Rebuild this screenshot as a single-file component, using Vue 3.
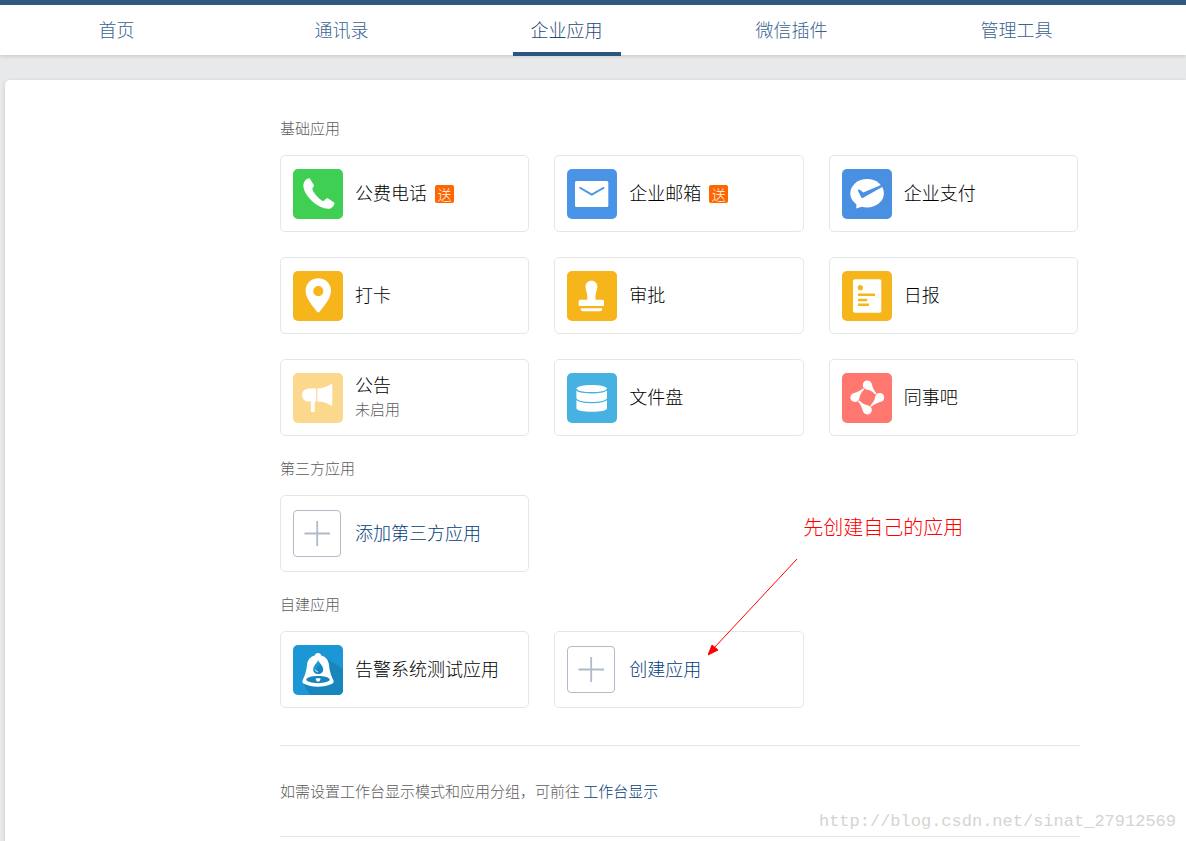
<script setup>
const navItems = [
  { label: '首页' },
  { label: '通讯录' },
  { label: '企业应用', active: true },
  { label: '微信插件' },
  { label: '管理工具' },
]

const sections = [
  {
    title: '基础应用',
    apps: [
      { name: '公费电话', icon: 'phone', color: '#3ecf53', gift: true },
      { name: '企业邮箱', icon: 'mail', color: '#4a94e8', gift: true },
      { name: '企业支付', icon: 'pay', color: '#4a90e2' },
      { name: '打卡', icon: 'pin', color: '#f7b51c' },
      { name: '审批', icon: 'stamp', color: '#f7b51c' },
      { name: '日报', icon: 'report', color: '#f7b51c' },
      { name: '公告', icon: 'horn', color: '#fbd88c', status: '未启用' },
      { name: '文件盘', icon: 'disk', color: '#47b2e1' },
      { name: '同事吧', icon: 'team', color: '#ff776f' },
    ],
  },
  {
    title: '第三方应用',
    apps: [{ name: '添加第三方应用', icon: 'add' }],
  },
  {
    title: '自建应用',
    apps: [
      { name: '告警系统测试应用', icon: 'bell', color: '#1b97d5' },
      { name: '创建应用', icon: 'add', note: '先创建自己的应用' },
    ],
  },
]
</script>

<template>
  <div class="page">
    <header class="header">
      <nav class="nav">
        <a
          v-for="item in navItems"
          :key="item.label"
          href="#"
          class="nav-link"
        ><span class="nav-label" :class="{ active: item.active }">{{ item.label }}</span></a>
      </nav>
    </header>

    <main class="panel">
      <section v-for="section in sections" :key="section.title" class="section">
        <h2 class="section-title">{{ section.title }}</h2>
        <ul class="grid">
          <li v-for="app in section.apps" :key="app.name" class="cell">
            <a href="#" class="card" :class="{ action: app.icon === 'add' }">
              <svg class="icon" viewBox="0 0 50 50" aria-hidden="true">
                <rect v-if="app.color" width="50" height="50" rx="5" :fill="app.color" />
                <path
                  v-if="app.icon === 'phone'"
                  fill="#fff"
                  d="M15.7 9.3Q16.6 9.1 17.1 10L20.8 16Q21.3 17 20.3 18Q18.9 19.6 19.6 21.2Q22.8 27.4 29.3 31.8Q30.8 32.4 32 30.7Q33.2 28.6 34.8 29.3L40.8 33.2Q42.2 34.2 41.2 35.4C39.8 38.4 37.8 39.8 35 39.8C30 39.6 24.6 37 20 33C14.4 28 10.6 22 10.4 17C10.3 13 12.6 10.2 15.7 9.3Z"
                />
                <g v-else-if="app.icon === 'mail'">
                  <rect x="8" y="12" width="33.3" height="26" rx="1.5" fill="#fff" />
                  <path d="M12.5 18.5L24.8 25.7L37.2 18.5" fill="none" stroke="#4a94e8" stroke-width="2" />
                </g>
                <g v-else-if="app.icon === 'pay'">
                  <ellipse cx="25.1" cy="24.2" rx="16.8" ry="14.2" fill="#fff" />
                  <path d="M14.5 32L14.3 39.6L22 37Z" fill="#fff" />
                  <path d="M15.8 21.2Q17 20 18.3 21.1L21.2 23.4L40.3 15.6L41 17.5L21.2 28.8Q19.7 29.6 19 28Z" fill="#4a90e2" />
                </g>
                <path
                  v-else-if="app.icon === 'pin'"
                  fill="#fff"
                  fill-rule="evenodd"
                  d="M25.3 7.3C18 7.3 12.6 12.8 12.6 19.8C12.6 27 19 34.5 24 40.8Q25.3 42.4 26.6 40.8C31.6 34.5 38 27 38 19.8C38 12.8 32.6 7.3 25.3 7.3ZM25.3 15A5.1 5.1 0 1 1 25.3 25.2A5.1 5.1 0 1 1 25.3 15Z"
                />
                <g v-else-if="app.icon === 'stamp'" fill="#fff">
                  <path d="M24.4 9.7C28 9.7 30.3 12.4 30.3 15.4C30.3 19 28 22 28.6 28.8H35.5Q37 28.8 37 30.3V35H11.7V30.3Q11.7 28.8 13.2 28.8H20.2C20.8 22 18.5 19 18.5 15.4C18.5 12.4 20.8 9.7 24.4 9.7Z" />
                  <path d="M13.8 37.2H35V38.2Q35 40.3 33 40.3H15.8Q13.8 40.3 13.8 38.2Z" />
                </g>
                <g v-else-if="app.icon === 'report'">
                  <rect x="11" y="8.3" width="28.3" height="33.4" rx="1.8" fill="#fff" />
                  <circle cx="18.3" cy="16.7" r="2.6" fill="#f7b51c" />
                  <path d="M16 23.7H33M16 28.9H25.3M16 33.7H27" stroke="#f7b51c" stroke-width="2.5" />
                </g>
                <g v-else-if="app.icon === 'horn'" fill="#fff">
                  <path d="M23.2 15.6V28.6H21.8V38Q21.8 39.3 20.5 39.3H19.2Q17.9 39.3 17.9 38V28.6H15.4A6.5 6.5 0 0 1 15.4 15.6Z" />
                  <path d="M24.3 15.5Q31.5 15.3 38.2 11Q39.3 10.5 39.3 11.7V31.8Q39.3 33 38.2 32.5Q31.5 28.8 24.3 28.6Z" />
                </g>
                <g v-else-if="app.icon === 'disk'">
                  <path d="M9.4 16C9.4 10.8 40 10.8 40 16V35.2C40 40 9.4 40 9.4 35.2Z" fill="#fff" />
                  <path d="M9.4 16C9.4 21 40 21 40 16M9 25.8C11 30.8 38.4 30.8 40.4 25.8" fill="none" stroke="#47b2e1" stroke-width="1.3" />
                </g>
                <g v-else-if="app.icon === 'team'" fill="#fff">
                  <path
                    v-for="turn in [0, 90, 180, 270]"
                    :key="turn"
                    :transform="`rotate(${turn} 25.3 24.5)`"
                    d="M25.2 7.6C27.8 7.6 29.4 9.2 29.9 11.4C30.6 14.6 32 17.2 34.6 20.4L33.2 21.4C30 18.2 27.6 17 24.6 16.6C22.2 16.2 20.8 14.6 20.8 12.1C20.8 9.5 22.6 7.6 25.2 7.6Z"
                  />
                </g>
                <g v-else-if="app.icon === 'bell'">
                  <path d="M33 13L50 24V45Q50 50 45 50H17L10 38Z" fill="#1985bd" />
                  <path
                    fill="#fff"
                    fill-rule="evenodd"
                    d="M25 8C26.8 8 28 9 28.3 10.6C32.8 11.8 35.4 15 36 20C36.7 27 38.4 31 40.4 35.2C41 37 40.4 38 39 38.8C31.5 42.6 18.5 42.6 11 38.8C9.6 38 9 37 9.6 35.2C11.6 31 13.3 27 14 20C14.6 15 17.2 11.8 21.7 10.6C22 9 23.2 8 25 8ZM25.2 15.2C23.4 18.7 20.2 20.8 20.2 24.4C20.2 27.2 22.4 29 25.2 29C28 29 30.2 27.2 30.2 24.4C30.2 20.8 27 18.7 25.2 15.2ZM25 31C18.6 31 13.3 32.5 13.3 34.6C13.3 36.7 18.6 38.2 25 38.2C31.4 38.2 36.7 36.7 36.7 34.6C36.7 32.5 31.4 31 25 31Z"
                  />
                  <path d="M22.7 33.2H27.5Q27.3 36.6 25.1 36.6Q22.9 36.6 22.7 33.2Z" fill="#fff" />
                  <path d="M22.3 24.5Q22.7 26.6 25 27" fill="none" stroke="#fff" stroke-width="0.9" />
                </g>
                <g v-else-if="app.icon === 'add'" fill="none" stroke="#b0bac8">
                  <rect x="0.5" y="1.5" width="47" height="46" rx="3.5" />
                  <path d="M11.5 24.5H37M24.2 12V37" stroke-width="1.8" />
                </g>
              </svg>
              <span class="text">
                <span class="name">{{ app.name }}</span>
                <span v-if="app.status" class="status">{{ app.status }}</span>
              </span>
              <span v-if="app.gift" class="gift">送</span>
            </a>
            <template v-if="app.note">
              <span class="note">{{ app.note }}</span>
              <svg class="arrow" viewBox="0 0 90 97" aria-hidden="true">
                <path d="M89 0L6 89" stroke="#f00" />
                <path d="M0 96L4 86L10 91Z" fill="#f00" stroke="#f00" stroke-linejoin="round" />
              </svg>
            </template>
          </li>
        </ul>
      </section>
      <p class="hint">如需设置工作台显示模式和应用分组，可前往 <a href="#">工作台显示</a></p>
    </main>
    <div class="watermark">http://blog.csdn.net/sinat_27912569</div>
  </div>
</template>

<style>
body {
  margin: 0;
  background: #e7e9eb;
}
</style>

<style scoped>
.page {
  position: relative;
  display: flex;
  flex-direction: column;
  min-height: 100vh;
  overflow: hidden;
  font-family: "Noto Sans CJK SC", sans-serif;
  font-weight: 300;
}

a {
  color: inherit;
  text-decoration: none;
}

.header {
  border-top: 5px solid #315882;
  background: #fff;
  box-shadow: 0 1px 4px rgba(0, 0, 0, 0.16);
}

.nav {
  display: grid;
  grid-template-columns: repeat(5, 1fr);
  height: 50px;
  margin: 0 57px 0 4px;
}

.nav-link {
  display: flex;
  justify-content: center;
  align-items: flex-start;
  font-size: 18px;
  line-height: 45px;
  color: #3a628f;
}

.nav-label {
  padding: 2px 18px 0;
}

.nav-label.active {
  color: #1f4a7b;
  border-bottom: 4px solid #2b5583;
}

.panel {
  flex: 1;
  margin: 25px 0 0 5px;
  padding: 35px 106px 4px 275px;
  border-radius: 5px 0 0 0;
  background: #fff;
  box-shadow: 0 1px 4px rgba(0, 0, 0, 0.14);
}

.section {
  margin-bottom: 19px;
}

.section-title {
  margin: 0 0 14px;
  font-size: 15px;
  font-weight: 300;
  line-height: 26px;
  color: #5c5c5c;
}

.grid {
  display: grid;
  grid-template-columns: repeat(3, 1fr);
  gap: 25px;
  margin: 0 2px 0 0;
  padding: 0;
  list-style: none;
}

.cell {
  position: relative;
}

.card {
  display: flex;
  align-items: center;
  height: 75px;
  padding: 0 12px;
  border: 1px solid #e4e6e8;
  border-radius: 5px;
  color: #000;
}

.card.action {
  color: #003d78;
}

.icon {
  flex: none;
  width: 50px;
  height: 50px;
  margin-right: 12px;
}

.text {
  display: flex;
  flex-direction: column;
  padding-bottom: 4px;
}

.name {
  font-size: 18px;
  line-height: 26px;
}

.status {
  font-size: 15px;
  line-height: 24px;
  color: #5c5c5c;
}

.gift {
  width: 19px;
  margin-left: 8px;
  border-radius: 2px;
  background: #f60;
  color: #fff;
  font-size: 14px;
  line-height: 18px;
  text-align: center;
}

.note {
  position: absolute;
  top: -116px;
  left: 249px;
  font-size: 20px;
  line-height: 24px;
  white-space: nowrap;
  color: #f00;
}

.arrow {
  position: absolute;
  top: -72px;
  left: 154px;
  width: 90px;
  height: 97px;
}

.hint {
  margin: 37px 0 0;
  padding: 32px 0;
  border: solid #e4e6e8;
  border-width: 1px 0;
  font-size: 15px;
  line-height: 26px;
  color: #5c5c5c;
}

.hint a {
  color: #003d78;
}

.watermark {
  position: absolute;
  right: 10px;
  bottom: 7px;
  font-family: "Liberation Mono", monospace;
  font-size: 17px;
  line-height: 24px;
  color: #d4d4d0;
}
</style>
